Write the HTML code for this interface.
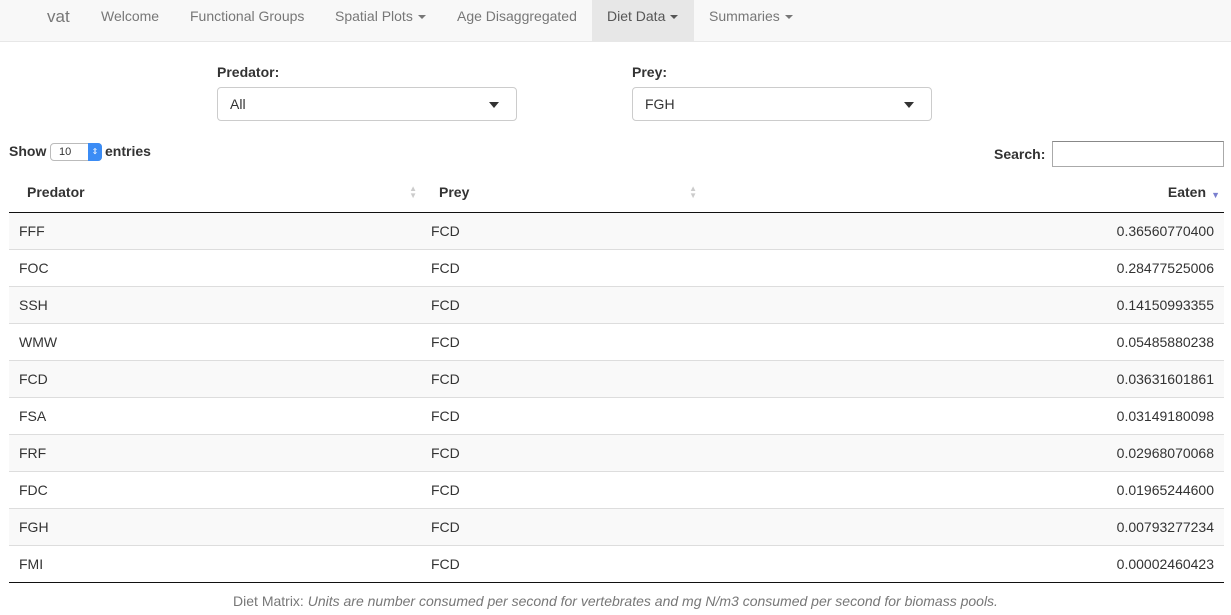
<!DOCTYPE html>
<html><head><style>
*{box-sizing:border-box;margin:0;padding:0}
body{width:1231px;height:615px;overflow:hidden;background:#fff;font-family:"Liberation Sans",Arial,sans-serif;font-size:14px;color:#333;position:relative}
.nav{position:absolute;left:0;top:0;width:1231px;height:42px;background:#f8f8f8;border-bottom:1px solid #e7e7e7}
.nav span{position:absolute;top:0;height:41px;line-height:33px;color:#777;font-size:14px}
.car{display:inline-block;width:0;height:0;border-left:4px solid transparent;border-right:4px solid transparent;border-top:4px solid #777;vertical-align:middle;margin-left:5px}
.lbl{position:absolute;font-weight:bold;font-size:14px}
.sel{position:absolute;width:300px;height:34px;border:1px solid #ccc;border-radius:4px;line-height:32px;padding-left:12px}
.sel:after{content:"";position:absolute;right:17px;top:14px;border-left:5px solid transparent;border-right:5px solid transparent;border-top:6px solid #333}
table{position:absolute;left:9px;top:172px;width:1215px;border-collapse:collapse}
th{height:40px;text-align:left;font-weight:bold;border-bottom:1px solid #111;padding:0 18px;position:relative}
td{height:37px;border-top:1px solid #ddd;padding:0 10px}
tr:nth-child(even) td{background:#f9f9f9}
td:last-child{text-align:right}
.srt{position:absolute;top:13px;color:#ccc;font-size:8px;line-height:7px}
</style></head><body>
<div class="nav">
<span style="left:47px;font-size:17px;line-height:33px">vat</span>
<span style="left:101px">Welcome</span>
<span style="left:190px">Functional Groups</span>
<span style="left:335px">Spatial Plots<i class="car"></i></span>
<span style="left:592px;width:102px;background:#e7e7e7;color:#555;padding-left:15px">Diet Data<i class="car" style="border-top-color:#555"></i></span>
<span style="left:457px">Age Disaggregated</span>
<span style="left:709px">Summaries<i class="car"></i></span>
</div>
<div class="lbl" style="left:217px;top:64px">Predator:</div>
<div class="sel" style="left:217px;top:87px">All</div>
<div class="lbl" style="left:632px;top:64px">Prey:</div>
<div class="sel" style="left:632px;top:87px">FGH</div>
<div class="lbl" style="left:9px;top:143px">Show</div>
<div style="position:absolute;left:50px;top:143px;width:52px;height:18px;border:1px solid #bbb;border-radius:4px;font-size:11px;line-height:16px;padding-left:8px">10<div style="position:absolute;right:-1px;top:-1px;width:14px;height:18px;background:#3b8cf5;border-radius:0 4px 4px 0;color:#fff;font-size:8px;text-align:center;line-height:17px">⇕</div></div>
<div class="lbl" style="left:105px;top:143px">entries</div>
<div class="lbl" style="left:994px;top:146px">Search:</div>
<div style="position:absolute;left:1052px;top:141px;width:172px;height:26px;border:1px solid #aaa;border-top-color:#888"></div>
<table>
<tr><th style="width:412px">Predator<span class="srt" style="right:4px">▲<br>▼</span></th><th style="width:280px;padding-left:18px">Prey<span class="srt" style="right:4px">▲<br>▼</span></th><th style="text-align:right;padding-right:18px">Eaten<span style="position:absolute;right:4px;top:18px;color:#7a7fcf;font-size:9px">▼</span></th></tr>
<tr><td>FFF</td><td>FCD</td><td>0.36560770400</td></tr>
<tr><td>FOC</td><td>FCD</td><td>0.28477525006</td></tr>
<tr><td>SSH</td><td>FCD</td><td>0.14150993355</td></tr>
<tr><td>WMW</td><td>FCD</td><td>0.05485880238</td></tr>
<tr><td>FCD</td><td>FCD</td><td>0.03631601861</td></tr>
<tr><td>FSA</td><td>FCD</td><td>0.03149180098</td></tr>
<tr><td>FRF</td><td>FCD</td><td>0.02968070068</td></tr>
<tr><td>FDC</td><td>FCD</td><td>0.01965244600</td></tr>
<tr><td>FGH</td><td>FCD</td><td>0.00793277234</td></tr>
<tr><td style="border-bottom:1px solid #111">FMI</td><td style="border-bottom:1px solid #111">FCD</td><td style="border-bottom:1px solid #111">0.00002460423</td></tr>
</table>
<div style="position:absolute;left:0;top:593px;width:1231px;text-align:center;color:#777;font-size:14px">Diet Matrix: <i>Units are number consumed per second for vertebrates and mg N/m3 consumed per second for biomass pools.</i></div>
</body></html>
